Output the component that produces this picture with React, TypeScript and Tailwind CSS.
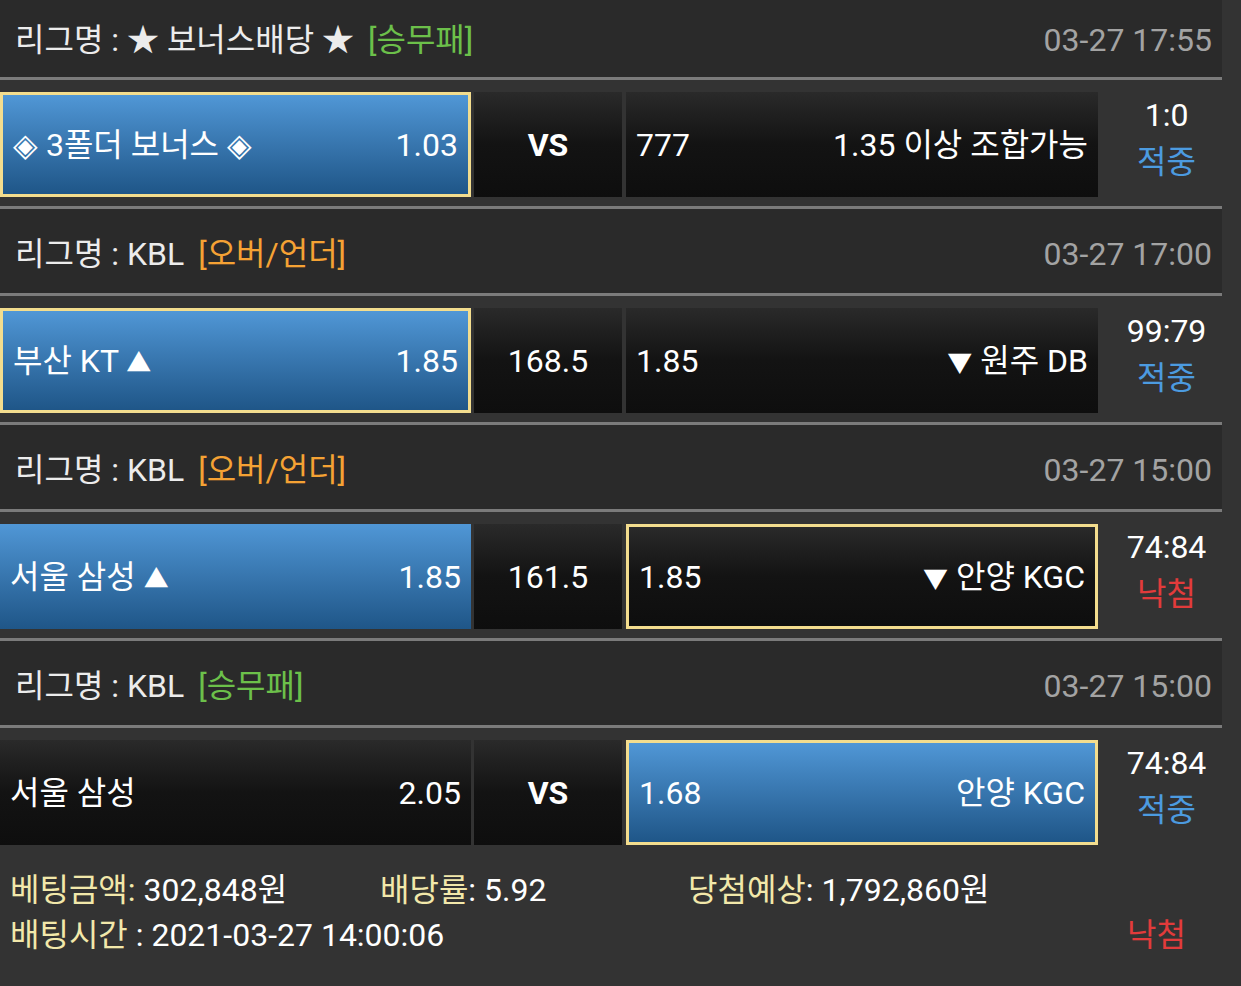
type Side = {
  text: React.ReactNode;
  odds: string;
  selected?: boolean;
  bordered?: boolean;
};

type Match = {
  league: string;
  tag: string;
  tagColor: string;
  date: string;
  home: Side;
  mid: string;
  midBold?: boolean;
  away: Side;
  score: string;
  result: string;
  win: boolean;
};

const Up = () => <span className="text-[25px]">▲</span>;
const Down = () => <span className="text-[25px]">▼</span>;

const matches: Match[] = [
  {
    league: '★ 보너스배당 ★',
    tag: '[승무패]',
    tagColor: 'text-[#6cc04a]',
    date: '03-27 17:55',
    home: { text: '◈ 3폴더 보너스 ◈', odds: '1.03', selected: true, bordered: true },
    mid: 'VS',
    midBold: true,
    away: { text: '1.35 이상 조합가능', odds: '777' },
    score: '1:0',
    result: '적중',
    win: true,
  },
  {
    league: 'KBL',
    tag: '[오버/언더]',
    tagColor: 'text-[#f5a234]',
    date: '03-27 17:00',
    home: { text: <>부산 KT <Up /></>, odds: '1.85', selected: true, bordered: true },
    mid: '168.5',
    away: { text: <><Down /> 원주 DB</>, odds: '1.85' },
    score: '99:79',
    result: '적중',
    win: true,
  },
  {
    league: 'KBL',
    tag: '[오버/언더]',
    tagColor: 'text-[#f5a234]',
    date: '03-27 15:00',
    home: { text: <>서울 삼성 <Up /></>, odds: '1.85', selected: true },
    mid: '161.5',
    away: { text: <><Down /> 안양 KGC</>, odds: '1.85', bordered: true },
    score: '74:84',
    result: '낙첨',
    win: false,
  },
  {
    league: 'KBL',
    tag: '[승무패]',
    tagColor: 'text-[#6cc04a]',
    date: '03-27 15:00',
    home: { text: '서울 삼성', odds: '2.05' },
    mid: 'VS',
    midBold: true,
    away: { text: '안양 KGC', odds: '1.68', selected: true, bordered: true },
    score: '74:84',
    result: '적중',
    win: true,
  },
];

function cellClass(side: Side) {
  const bg = side.selected
    ? 'bg-gradient-to-b from-[#5097d6] to-[#1f5688]'
    : 'bg-gradient-to-b from-[#2a2a2a] via-[#131313] to-[#0e0e0e]';
  const border = side.bordered ? 'border-[3px] border-[#f3dd8e]' : '';
  return `${bg} ${border}`;
}

function MatchBlock({ m, first }: { m: Match; first: boolean }) {
  return (
    <div>
      {!first && <div className="h-[3px] bg-[#7b7b7b]" />}
      <div
        className={`flex items-center justify-between bg-[#2a2a2a] pl-[15px] pr-[10px] ${
          first ? 'h-[77px] pt-[2px]' : 'h-[84px] pt-[5px]'
        }`}
      >
        <div className="text-[#ececec]">
          리그명 : {m.league} <span className={`ml-[6px] ${m.tagColor}`}>{m.tag}</span>
        </div>
        <div className="text-[#a3a3a3]">{m.date}</div>
      </div>
      <div className="h-[3px] bg-[#7b7b7b]" />
      <div className="flex h-[126px] pt-[12px]">
        <div
          className={`flex h-[105px] w-[471px] items-center justify-between px-[10px] ${cellClass(m.home)}`}
        >
          <span>{m.home.text}</span>
          <span>{m.home.odds}</span>
        </div>
        <div className="ml-[3px] flex h-[105px] w-[148px] items-center justify-center bg-gradient-to-b from-[#2a2a2a] via-[#131313] to-[#0e0e0e]">
          <span className={m.midBold ? 'font-bold' : ''}>{m.mid}</span>
        </div>
        <div
          className={`ml-[4px] flex h-[105px] w-[472px] items-center justify-between px-[10px] ${cellClass(m.away)}`}
        >
          <span>{m.away.odds}</span>
          <span>{m.away.text}</span>
        </div>
        <div className="flex h-[105px] w-[124px] flex-col items-center justify-center pb-[12px] pl-[13px] leading-[47px]">
          <span>{m.score}</span>
          <span className={m.win ? 'text-[#4c9be0]' : 'text-[#e23b3b]'}>{m.result}</span>
        </div>
      </div>
    </div>
  );
}

export default function App() {
  return (
    <div
      className="h-[986px] w-full overflow-hidden bg-[#333333] text-[32px] text-white"
      style={{ fontFamily: 'Roboto, "Noto Sans CJK KR", sans-serif' }}
    >
      <div className="w-[1222px]">
        {matches.map((m, i) => (
          <MatchBlock key={i} m={m} first={i === 0} />
        ))}
        <div className="flex items-center pl-[10px] pt-[14px] leading-[45px]">
          <div className="w-[370px]">
            <span className="text-[#f2e8aa]">베팅금액:</span> 302,848원
          </div>
          <div className="w-[308px]">
            <span className="text-[#f2e8aa]">배당률</span>: 5.92
          </div>
          <div>
            <span className="text-[#f2e8aa]">당첨예상</span>: 1,792,860원
          </div>
        </div>
        <div className="flex items-center justify-between pl-[10px] pr-[36px] leading-[45px]">
          <div>
            <span className="text-[#f2e8aa]">배팅시간</span> : 2021-03-27 14:00:06
          </div>
          <div className="text-[#e23b3b]">낙첨</div>
        </div>
      </div>
    </div>
  );
}
